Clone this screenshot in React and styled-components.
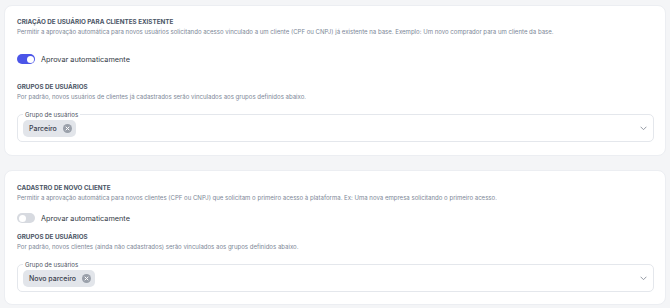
import React, { useState } from "react";
import styled, { createGlobalStyle } from "styled-components";

const GlobalStyle = createGlobalStyle`
  * { box-sizing: border-box; }
  body {
    margin: 0;
    background: #f4f5f7;
    font-family: Inter, "Noto Sans", sans-serif;
    -webkit-font-smoothing: antialiased;
  }
`;

const sections = [
  {
    id: "existente",
    title: "Criação de usuário para clientes existente",
    desc: "Permitir a aprovação automática para novos usuários solicitando acesso vinculado a um cliente (CPF ou CNPJ) já existente na base. Exemplo: Um novo comprador para um cliente da base.",
    on: true,
    groupsDesc: "Por padrão, novos usuários de clientes já cadastrados serão vinculados aos grupos definidos abaixo.",
    chips: ["Parceiro"],
    roomy: true,
  },
  {
    id: "novo",
    title: "Cadastro de novo cliente",
    desc: "Permitir a aprovação automática para novos clientes (CPF ou CNPJ) que solicitam o primeiro acesso à plataforma. Ex: Uma nova empresa solicitando o primeiro acesso.",
    on: false,
    groupsDesc: "Por padrão, novos clientes (ainda não cadastrados) serão vinculados aos grupos definidos abaixo.",
    chips: ["Novo parceiro"],
    roomy: false,
  },
];

const Toggle = ({ on, onChange }) => (
  <Switch type="button" $on={on} onClick={() => onChange(!on)}>
    <Knob $on={on} />
  </Switch>
);

const Section = ({ s }) => {
  const [on, setOn] = useState(s.on);
  const [chips, setChips] = useState(s.chips);
  return (
    <Card $roomy={s.roomy}>
      <Title>{s.title}</Title>
      <Desc>{s.desc}</Desc>
      <ToggleRow $roomy={s.roomy}>
        <Toggle on={on} onChange={setOn} />
        <ToggleLabel>Aprovar automaticamente</ToggleLabel>
      </ToggleRow>
      <Title>Grupos de usuários</Title>
      <Desc>{s.groupsDesc}</Desc>
      <Field>
        <Legend>Grupo de usuários</Legend>
        <Chips>
          {chips.map((c) => (
            <Chip key={c}>
              {c}
              <ChipRemove onClick={() => setChips(chips.filter((x) => x !== c))}>
                <svg width="5" height="5" viewBox="0 0 10 10">
                  <path d="M2 2 L8 8 M8 2 L2 8" stroke="#fff" strokeWidth="2" strokeLinecap="round" />
                </svg>
              </ChipRemove>
            </Chip>
          ))}
        </Chips>
        <svg width="7" height="5" viewBox="0 0 12 8">
          <path d="M1.5 1.5 L6 6 L10.5 1.5" fill="none" stroke="#8b919c" strokeWidth="1.6" strokeLinecap="round" strokeLinejoin="round" />
        </svg>
      </Field>
    </Card>
  );
};

export default function App() {
  return (
    <>
      <GlobalStyle />
      <Page>
        {sections.map((s) => (
          <Section key={s.id} s={s} />
        ))}
      </Page>
    </>
  );
}

const Page = styled.div`
  display: flex;
  flex-direction: column;
  gap: 14px;
  padding: 5px 4px;
`;

const Card = styled.div`
  background: #fff;
  border: 1px solid #eceef2;
  border-radius: 8px;
  padding: ${(p) => (p.$roomy ? "11px 11px 13px 12px" : "12px 11px 12px 12px")};
`;

const Title = styled.div`
  font-size: 6.3px;
  font-weight: 700;
  text-transform: uppercase;
  color: #4b5565;
  line-height: 10px;
`;

const Desc = styled.div`
  font-size: 6.05px;
  color: #7d8797;
  line-height: 10px;
`;

const ToggleRow = styled.div`
  display: flex;
  align-items: center;
  gap: 6px;
  margin: ${(p) => (p.$roomy ? "17px 0 18px" : "10px 0 9px")};
  height: 10px;
`;

const Switch = styled.button`
  position: relative;
  width: 18px;
  height: 10px;
  padding: 0;
  border: 0;
  border-radius: 5px;
  background: ${(p) => (p.$on ? "#4b55e8" : "#d7dae0")};
  cursor: pointer;
`;

const Knob = styled.span`
  position: absolute;
  top: 1.5px;
  left: ${(p) => (p.$on ? "9.5px" : "1.5px")};
  width: 7px;
  height: 7px;
  border-radius: 50%;
  background: #fff;
`;

const ToggleLabel = styled.span`
  font-size: 7.3px;
  color: #333a45;
`;

const Field = styled.div`
  position: relative;
  display: flex;
  align-items: center;
  justify-content: space-between;
  margin-top: 12px;
  height: 28px;
  padding: 0 6px 0 5px;
  border: 1px solid #e4e7ec;
  border-radius: 5px;
`;

const Legend = styled.span`
  position: absolute;
  top: -5px;
  left: 5px;
  padding: 0 2px;
  background: #fff;
  font-size: 6.1px;
  line-height: 9px;
  color: #4b5260;
`;

const Chips = styled.div`
  display: flex;
  gap: 4px;
  padding-top: 1px;
`;

const Chip = styled.span`
  display: inline-flex;
  align-items: center;
  gap: 6px;
  height: 17px;
  padding: 0 4px 0 6px;
  border-radius: 5px;
  background: #e2e5ea;
  font-size: 7px;
  font-weight: 500;
  color: #39404c;
`;

const ChipRemove = styled.span`
  display: inline-flex;
  align-items: center;
  justify-content: center;
  width: 9px;
  height: 9px;
  border-radius: 50%;
  background: #9aa0aa;
  cursor: pointer;
`;
